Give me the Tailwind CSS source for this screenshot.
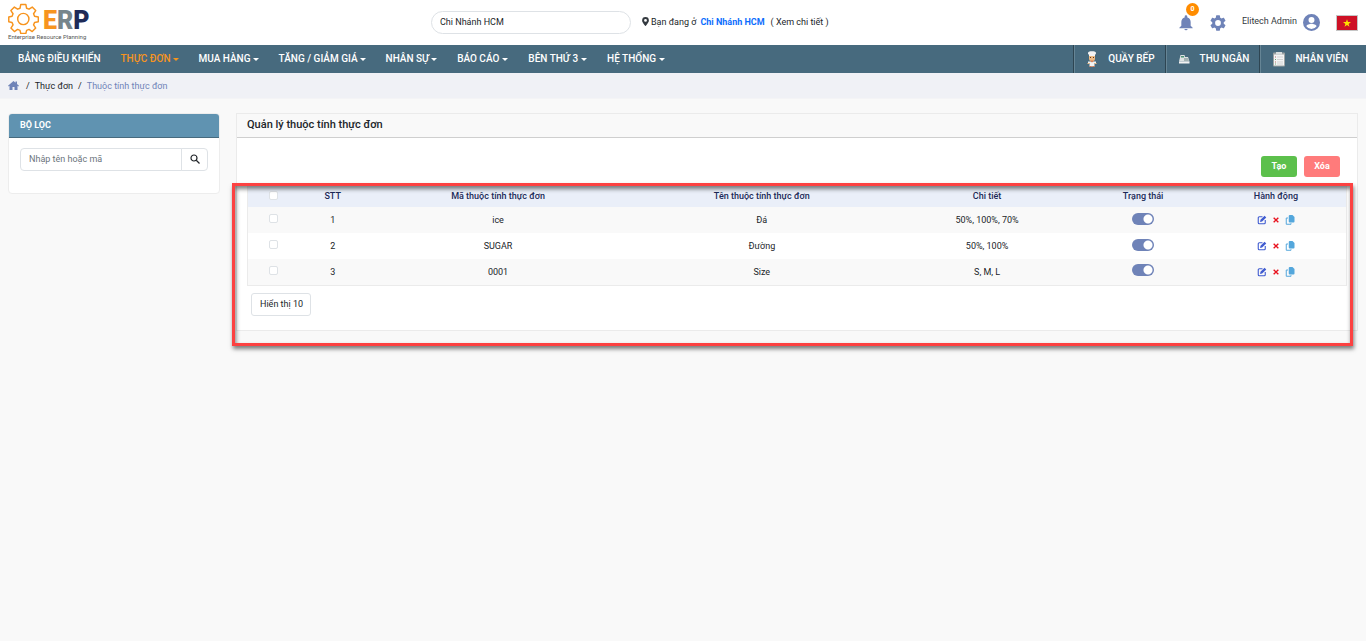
<!DOCTYPE html>
<html lang="vi">
<head>
<meta charset="utf-8">
<meta name="viewport" content="width=device-width, initial-scale=1">
<title>Thuộc tính thực đơn</title>
<script src="https://cdn.jsdelivr.net/npm/@tailwindcss/browser@4"></script>
</head>
<body class="min-h-screen bg-[#f9f9f9] font-['Roboto',sans-serif] text-[9px] leading-4 text-[#212529]">
<svg class="hidden" aria-hidden="true">
  <symbol id="edit" viewBox="0 0 20 20"><path d="M11 3.500H4.500a2 2 0 0 0-2 2v10a2 2 0 0 0 2 2h10a2 2 0 0 0 2-2V10" fill="none" stroke="currentColor" stroke-width="2.200"/><path d="M6 14l1-4.300L15.200 1.500l3.300 3.300-8.200 8.200z" fill="currentColor"/></symbol>
  <symbol id="remove" viewBox="0 0 12 12"><path d="M2.500 2.500l7 7M9.500 2.500l-7 7" stroke="currentColor" stroke-width="2" fill="none"/></symbol>
  <symbol id="copy" viewBox="0 0 20 20"><path d="M9.500 0H15l4 4v9a2 2 0 0 1-2 2H9.500a2 2 0 0 1-2-2V2a2 2 0 0 1 2-2z" fill="currentColor"/><path d="M6 6H2.500v12.500H12V16.500" fill="none" stroke="currentColor" stroke-width="2"/></symbol>
</svg>

<header class="flex h-[45px] items-center bg-white">
  <a href="#" class="flex w-[431px] flex-col pb-1 pl-2" aria-label="ERP Enterprise Resource Planning">
    <span class="flex h-8 items-center gap-1">
      <svg class="size-[31px]" viewBox="0 0 32 32" fill="none" stroke="#f7941e" stroke-width="1.500" stroke-linejoin="round">
        <path d="M13.200 1.500h5.200l.8 3.900 2.500 1 3.300-2.200 3.600 3.600-2.200 3.300 1 2.500 3.900.8v4.900l-3.900.8-1 2.500 2.200 3.300-3.600 3.600-3.300-2.200-2.500 1-.8 3.200h-5.200l-.8-3.200-2.500-1-3.300 2.200L3 25.900l2.200-3.300-1-2.500-3.400-.8v-4.900l3.400-.8 1-2.500L3 7.800l3.600-3.600 3.300 2.200 2.500-1z"/>
        <circle cx="15.800" cy="16.500" r="5.800"/>
      </svg>
      <span class="pt-1 font-['Roboto',sans-serif] text-[25px] font-black leading-8"><span class="text-[#f7941e]">E</span><span class="text-[#77868c]">R</span><span class="text-[#1e2b58]">P</span></span>
    </span>
    <span class="text-[6px] leading-1 text-[#555]">Enterprise Resource Planning</span>
  </a>
  <input type="text" aria-label="Chi nhánh" value="Chi Nhánh HCM" class="h-[23px] w-[200px] rounded-full border border-[#dee2e6] bg-white px-2 pb-0.5 text-[9px] outline-none">
  <p class="ml-[11px] flex items-center gap-0.5 pb-0.5 text-[9px]"><svg class="h-[9px] w-[7px]" viewBox="0 0 384 512" fill="#343a40"><path d="M172 502C27 291 0 270 0 192a192 192 0 1 1 384 0c0 78-27 99-172 310a24 24 0 0 1-40 0zM192 272a80 80 0 1 0 0-160 80 80 0 0 0 0 160z"/></svg>Bạn đang ở <a href="#" class="mr-1 ml-0.5 font-bold text-[#0d6efd]">Chi Nhánh HCM</a><a href="#">( Xem chi tiết )</a></p>
  <div class="ml-auto flex items-center pr-2">
    <button type="button" aria-label="Thông báo" class="relative mr-4 flex text-[#6f83b8]">
      <svg class="size-4" viewBox="0 0 24 24" fill="currentColor"><path d="M12 23a2.500 2.500 0 0 0 2.500-2h-5A2.500 2.500 0 0 0 12 23zM19 16v-5.500c0-3.400-2-6-5-6.800V2.500a2 2 0 0 0-4 0v1.200c-3 .8-5 3.400-5 6.800V16l-3 3v1h20v-1z"/></svg>
      <span class="absolute -top-3 left-2 flex size-[13px] items-center justify-center rounded-full bg-[#ff8c00] text-[7px] font-bold text-white">0</span>
    </button>
    <button type="button" aria-label="Cài đặt" class="mr-4 text-[#6f83b8]">
      <svg class="size-4" viewBox="2 2 20 20" fill="currentColor"><path d="M19.140 12.940c.04-.3.060-.61.060-.94s-.02-.64-.07-.94l2.030-1.580a.49.49 0 0 0 .12-.61l-1.920-3.320a.49.49 0 0 0-.59-.22l-2.390.96c-.5-.38-1.030-.7-1.620-.94l-.36-2.540a.48.48 0 0 0-.48-.41h-3.840a.48.48 0 0 0-.47.41l-.36 2.540c-.59.24-1.130.57-1.620.94l-2.390-.96a.48.48 0 0 0-.59.22L2.740 8.870a.48.48 0 0 0 .12.610l2.030 1.580c-.05.3-.09.63-.09.94s.02.640.07.940l-2.030 1.580a.49.49 0 0 0-.12.610l1.920 3.320c.12.220.37.290.59.220l2.390-.96c.5.380 1.030.7 1.620.940l.36 2.540c.05.240.24.410.48.410h3.840c.24 0 .44-.17.47-.41l.36-2.540c.59-.24 1.130-.56 1.620-.94l2.390.96c.22.080.47 0 .59-.22l1.920-3.320a.48.48 0 0 0-.12-.61zM12 15.600a3.600 3.600 0 1 1 0-7.200 3.600 3.600 0 0 1 0 7.200z"/></svg>
    </button>
    <a href="#" class="mr-4 flex items-center gap-1.5 text-[9px] text-[#343a40]"><span class="pb-1">Elitech Admin</span>
      <svg class="size-[17px]" viewBox="2 2 20 20" fill="#6f83b8"><path d="M12 2a10 10 0 1 0 0 20 10 10 0 0 0 0-20zm0 3.500a3.500 3.500 0 1 1 0 7 3.500 3.500 0 0 1 0-7zm0 14.200a7.200 7.200 0 0 1-6-3.200c0-2 4-3.100 6-3.100s6 1.100 6 3.100a7.200 7.200 0 0 1-6 3.200z"/></svg>
    </a>
    <button type="button" aria-label="Tiếng Việt"><svg class="h-4 w-[22px]" viewBox="0 0 22 16"><rect x=".5" y=".5" width="21" height="15" fill="#ce1126" stroke="#c5c5c5"/><path fill="#fde100" d="M11 4.200l1 2.900h3l-2.400 1.800.9 2.900-2.500-1.800-2.500 1.800.9-2.900L7 7.100h3z"/></svg></button>
  </div>
</header>

<nav class="flex h-7 items-stretch bg-[#476a7e] text-[10px] font-medium text-white">
  <div class="flex flex-1 items-center gap-5 pl-[18px]">
    <a href="#">BẢNG ĐIỀU KHIỂN</a>
    <a href="#" class="flex items-center gap-0.5 text-[#f7941e]">THỰC ĐƠN<i class="border-x-3 border-t-3 border-x-transparent border-t-current"></i></a>
    <a href="#" class="flex items-center gap-0.5">MUA HÀNG<i class="border-x-3 border-t-3 border-x-transparent border-t-current"></i></a>
    <a href="#" class="flex items-center gap-0.5">TĂNG / GIẢM GIÁ<i class="border-x-3 border-t-3 border-x-transparent border-t-current"></i></a>
    <a href="#" class="flex items-center gap-0.5">NHÂN SỰ<i class="border-x-3 border-t-3 border-x-transparent border-t-current"></i></a>
    <a href="#" class="flex items-center gap-[3px]">BÁO CÁO<i class="border-x-3 border-t-3 border-x-transparent border-t-current"></i></a>
    <a href="#" class="flex items-center gap-[3px]">BÊN THỨ 3<i class="border-x-3 border-t-3 border-x-transparent border-t-current"></i></a>
    <a href="#" class="flex items-center gap-[3px]">HỆ THỐNG<i class="border-x-3 border-t-3 border-x-transparent border-t-current"></i></a>
  </div>
  <a href="#" class="flex items-center gap-2 border-l border-[#2e4552] pr-2.5 pl-2.5 shadow-[inset_1px_0_#668595]">
    <svg class="size-4" viewBox="0 0 16 16"><path fill="#f3f3f3" d="M5 5V3.800A1.800 1.800 0 0 1 4.500.9C6 .2 7 .2 8 .2s2 0 3.500.7A1.800 1.800 0 0 1 11 3.800V5z"/><path fill="#edb982" d="M5 5h6v2.500a3 3 0 0 1-6 0z"/><path fill="#5b3a24" d="M6 6h1v1H6zM9 6h1v1H9z"/><path fill="#f3f3f3" d="M4 10.500h8v1.500H4zM5.500 12h5v3.500h-5z"/><path fill="#d9794f" d="M6 9.500h4l-2 2zM5.500 15h2v1h-2zM8.500 15h2v1h-2z"/><path fill="#edb982" d="M3.500 12h2v1h-2zM10.500 12h2v1h-2z"/></svg>
    QUẦY BẾP</a>
  <a href="#" class="flex items-center gap-2 border-l border-[#2e4552] pr-2.5 pl-2.5 shadow-[inset_1px_0_#668595]">
    <svg class="size-4" viewBox="0 0 16 16"><path fill="#dfe3e3" d="M4.500 4h4l.5 2h3l1.500 4.500H3z"/><path fill="#a3b3b3" d="M8 7h4l1 3H8z"/><path fill="#4f9478" d="M5 5h3v1.500H5z"/><path fill="#f2f2f2" d="M3 10.500h10.500v2H3z"/></svg>
    THU NGÂN</a>
  <a href="#" class="flex items-center gap-2 border-l border-[#2e4552] pr-[18px] pl-[11px] shadow-[inset_1px_0_#668595]">
    <svg class="size-4" viewBox="0 0 16 16"><rect x="2" y="1.500" width="12" height="14" rx="1" fill="#9ea3a3"/><path fill="#f4f4f4" d="M3 3.500h10v11H3z"/><path fill="#d9dddd" d="M5 1h6v2.500H5z"/><path stroke="#c4c4c4" stroke-width=".7" d="M6 6h6M6 8.500h6M6 11h6M6 13h6"/><path stroke="#b86868" d="M4 6h1M4 11h1"/><path stroke="#6aa873" d="M4 8.500h1M4 13h1"/></svg>
    NHÂN VIÊN</a>
</nav>

<nav aria-label="Đường dẫn" class="flex h-[26px] items-center gap-[5px] border-b border-[#f4f4f6] bg-[#f0f1f6] pl-2">
  <a href="#" aria-label="Trang chủ" class="mr-0.5"><svg class="h-[9px] w-[11px]" viewBox="0 0 22 18" fill="#6f83b8"><path d="M11 0L0 9.500 1.500 11 3 9.700V18h6v-6h4v6h6V9.700l1.500 1.300L22 9.500l-4-3.400V1h-3v2.500z"/></svg></a>
  <span>/</span><a href="#">Thực đơn</a><span>/</span><span class="text-[#6f83b8]">Thuộc tính thực đơn</span>
</nav>

<main class="flex items-start gap-4 px-2 pt-3.5">
  <aside class="w-[212px] shrink-0 overflow-hidden rounded-sm border border-[#ededed] bg-white">
    <h2 class="h-6 border-b border-[#476a7e] bg-[#6093b1] px-[11px] pt-[3px] text-[9px] font-bold leading-4 text-white">BỘ LỌC</h2>
    <form class="flex px-[11px] pt-2.5 pb-[22px]" onsubmit="return false">
      <input type="text" aria-label="Nhập tên hoặc mã" placeholder="Nhập tên hoặc mã" class="h-[23px] min-w-0 flex-1 rounded-l border border-[#dee2e6] px-2 pb-0.5 text-[9px] outline-none placeholder:text-[#6c757d]">
      <button type="submit" aria-label="Tìm kiếm" class="-ml-px flex h-[23px] w-[27px] items-center justify-center rounded-r border border-[#dee2e6] pb-0.5"><svg class="size-[10px]" viewBox="0 0 20 20" fill="none" stroke="#212529" stroke-width="2.400"><circle cx="8" cy="8" r="6"/><path d="M12.500 12.500L19 19"/></svg></button>
    </form>
  </aside>

  <section class="relative min-w-0 flex-1 border border-[#ebebeb] bg-white">
    <h1 class="h-6 border-b border-[#cfcfcf] bg-[#f9f9f9] px-2.5 pt-[3px] text-[11px] font-medium leading-4">Quản lý thuộc tính thực đơn</h1>
    <div class="px-2.5 pt-[18px] pb-3.5">
      <div class="flex justify-end gap-[7px] pr-[7px]">
        <button type="button" class="h-[21px] w-9 rounded-[3px] bg-[#5cc04c] pb-0.5 text-[9px] font-bold text-white">Tạo</button>
        <button type="button" class="h-[21px] w-9 rounded-[3px] bg-[#ff7b7b] pb-0.5 text-[9px] font-bold text-white">Xóa</button>
      </div>
      <table class="mt-2 w-full table-fixed border-collapse border-x border-b border-[#ebebeb] text-center">
        <colgroup><col class="w-[4.700%]"><col class="w-[6.100%]"><col class="w-[24%]"><col class="w-[24%]"><col class="w-[17%]"><col class="w-[11.400%]"><col></colgroup>
        <thead class="bg-[#eaeff9] text-[#1b2a57]">
          <tr class="h-[22px]">
            <th class="p-0 pb-0.5"><input type="checkbox" aria-label="Chọn tất cả" class="mx-auto block size-[9px] appearance-none rounded-xs border border-[#dee2e6] bg-white"></th>
            <th class="p-0 font-medium">STT</th><th class="p-0 font-medium">Mã thuộc tính thực đơn</th><th class="p-0 font-medium">Tên thuộc tính thực đơn</th><th class="p-0 font-medium">Chi tiết</th><th class="p-0 font-medium">Trạng thái</th><th class="p-0 font-medium">Hành động</th>
          </tr>
        </thead>
        <tbody>
          <tr class="h-[26px] bg-[#f9f9f9]">
            <td class="pb-[3px]"><input type="checkbox" aria-label="Chọn ice" class="mx-auto block size-[9px] appearance-none rounded-xs border border-[#dee2e6] bg-white"></td>
            <td>1</td><td>ice</td><td>Đá</td><td>50%, 100%, 70%</td>
            <td class="pb-0.5"><input type="checkbox" role="switch" checked aria-label="Trạng thái ice" class="mx-auto block h-3 w-[22px] appearance-none rounded-full bg-[#6f83b8] bg-[radial-gradient(circle_at_16px_6px,white_4px,transparent_5px)]"></td>
            <td><div class="flex items-center justify-center gap-[5px]"><button type="button" aria-label="Sửa" class="text-[#3f5bd0]"><svg class="size-[10px]"><use href="#edit"/></svg></button><button type="button" aria-label="Xóa" class="text-[#e8101c]"><svg class="size-2"><use href="#remove"/></svg></button><button type="button" aria-label="Sao chép" class="text-[#54a7dc]"><svg class="size-[10px]"><use href="#copy"/></svg></button></div></td>
          </tr>
          <tr class="h-[26px] bg-white">
            <td class="pb-[3px]"><input type="checkbox" aria-label="Chọn SUGAR" class="mx-auto block size-[9px] appearance-none rounded-xs border border-[#dee2e6] bg-white"></td>
            <td>2</td><td>SUGAR</td><td>Đường</td><td>50%, 100%</td>
            <td class="pb-[3px]"><input type="checkbox" role="switch" checked aria-label="Trạng thái SUGAR" class="mx-auto block h-3 w-[22px] appearance-none rounded-full bg-[#6f83b8] bg-[radial-gradient(circle_at_16px_6px,white_4px,transparent_5px)]"></td>
            <td><div class="flex items-center justify-center gap-[5px]"><button type="button" aria-label="Sửa" class="text-[#3f5bd0]"><svg class="size-[10px]"><use href="#edit"/></svg></button><button type="button" aria-label="Xóa" class="text-[#e8101c]"><svg class="size-2"><use href="#remove"/></svg></button><button type="button" aria-label="Sao chép" class="text-[#54a7dc]"><svg class="size-[10px]"><use href="#copy"/></svg></button></div></td>
          </tr>
          <tr class="h-[26px] bg-[#f9f9f9]">
            <td class="pb-[3px]"><input type="checkbox" aria-label="Chọn 0001" class="mx-auto block size-[9px] appearance-none rounded-xs border border-[#dee2e6] bg-white"></td>
            <td>3</td><td>0001</td><td>Size</td><td>S, M, L</td>
            <td class="pb-[3px]"><input type="checkbox" role="switch" checked aria-label="Trạng thái 0001" class="mx-auto block h-3 w-[22px] appearance-none rounded-full bg-[#6f83b8] bg-[radial-gradient(circle_at_16px_6px,white_4px,transparent_5px)]"></td>
            <td><div class="flex items-center justify-center gap-[5px]"><button type="button" aria-label="Sửa" class="text-[#3f5bd0]"><svg class="size-[10px]"><use href="#edit"/></svg></button><button type="button" aria-label="Xóa" class="text-[#e8101c]"><svg class="size-2"><use href="#remove"/></svg></button><button type="button" aria-label="Sao chép" class="text-[#54a7dc]"><svg class="size-[10px]"><use href="#copy"/></svg></button></div></td>
          </tr>
        </tbody>
      </table>
      <select aria-label="Số dòng hiển thị" class="mt-[7px] ml-1 block h-[23px] w-[60px] appearance-none rounded-[3px] border border-[#dee2e6] bg-white pl-2 text-[9px]"><option>Hiển thị 10</option></select>
    </div>
    <div class="pointer-events-none absolute top-[69px] right-1 -bottom-4 -left-[5px] border-3 border-[#fc4141] shadow-[1px_3px_4px_#00000080,inset_1px_3px_4px_#00000080]"></div>
  </section>
</main>
</body>
</html>
